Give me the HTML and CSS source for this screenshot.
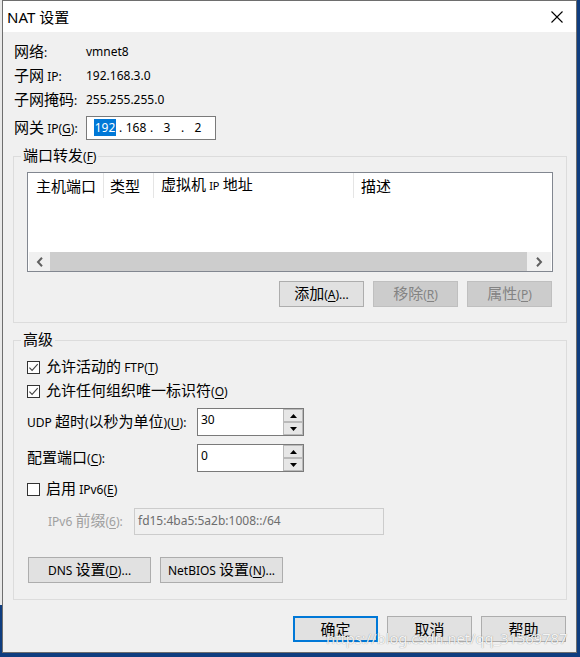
FILE: index.html
```html
<!DOCTYPE html>
<html lang="zh-CN">
<head>
<meta charset="utf-8">
<title>NAT 设置</title>
<link rel="stylesheet" href="styles.css">
</head>
<body>
<div class="win">
  <div class="titlebar">
    <span class="title">NAT 设置</span>
    <svg class="close" width="12" height="12" viewBox="0 0 12 12"><path d="M0.5 0.5L11.5 11.5M11.5 0.5L0.5 11.5" stroke="#000" stroke-width="1.1"/></svg>
  </div>
  <div class="body">
    <div class="info">
      <div class="row"><span class="lbl"><span class="c">网络</span>:</span><span>vmnet8</span></div>
      <div class="row"><span class="lbl"><span class="c">子网</span> IP:</span><span>192.168.3.0</span></div>
      <div class="row"><span class="lbl"><span class="c">子网掩码</span>:</span><span>255.255.255.0</span></div>
      <div class="row gw"><span class="lbl"><span class="c">网关</span> IP(<u>G</u>):</span>
        <div class="ipbox">
          <span class="seg"><span class="sel">192</span></span><span class="dot">.</span><span class="seg">168</span><span class="dot">.</span><span class="seg">3</span><span class="dot">.</span><span class="seg">2</span>
        </div>
      </div>
    </div>

    <fieldset class="group g1">
      <legend><span class="c">端口转发</span>(<u>F</u>)</legend>
      <div class="list">
        <div class="lhead">
          <div class="col col1"><span class="c">主机端口</span></div>
          <div class="col col2"><span class="c">类型</span></div>
          <div class="col col3"><span><span class="c">虚拟机</span> <span class="small">IP</span> <span class="c">地址</span></span></div>
          <div class="col col4"><span class="c">描述</span></div>
        </div>
        <div class="lbody"></div>
        <div class="hscroll">
          <div class="sarrow left"><svg width="8" height="10" viewBox="0 0 8 10"><path d="M6 0.8L2 5L6 9.2" fill="none" stroke="#606060" stroke-width="2"/></svg></div>
          <div class="thumb"></div>
          <div class="sarrow right"><svg width="8" height="10" viewBox="0 0 8 10"><path d="M2 0.8L6 5L2 9.2" fill="none" stroke="#606060" stroke-width="2"/></svg></div>
        </div>
      </div>
      <div class="btnrow">
        <button class="btn"><span><span class="c">添加</span>(<u>A</u>)...</span></button>
        <button class="btn dis"><span><span class="c">移除</span>(<u>R</u>)</span></button>
        <button class="btn dis"><span><span class="c">属性</span>(<u>P</u>)</span></button>
      </div>
    </fieldset>

    <fieldset class="group g2">
      <legend><span class="c">高级</span></legend>
      <div class="cbrow first">
        <svg class="cb" width="13" height="13" viewBox="0 0 13 13"><rect x="0.5" y="0.5" width="12" height="12" fill="#fff" stroke="#333"/><path d="M2.4 6.6L5.1 9.4L10.7 3.2" fill="none" stroke="#444" stroke-width="1.1"/></svg>
        <span><span class="c">允许活动的</span> FTP(<u>T</u>)</span>
      </div>
      <div class="cbrow second">
        <svg class="cb" width="13" height="13" viewBox="0 0 13 13"><rect x="0.5" y="0.5" width="12" height="12" fill="#fff" stroke="#333"/><path d="M2.4 6.6L5.1 9.4L10.7 3.2" fill="none" stroke="#444" stroke-width="1.1"/></svg>
        <span><span class="c">允许任何组织唯一标识符</span>(<u>O</u>)</span>
      </div>
      <div class="frow udp">
        <span class="flbl">UDP <span class="c">超时</span>(<span class="c">以秒为单位</span>)(<u>U</u>):</span>
        <div class="spin">
          <span class="val">30</span>
          <div class="spinbtns">
            <div class="sb"><svg width="7" height="4" viewBox="0 0 7 4"><path d="M0 4L3.5 0L7 4Z" fill="#000"/></svg></div>
            <div class="sb"><svg width="7" height="4" viewBox="0 0 7 4"><path d="M0 0L7 0L3.5 4Z" fill="#000"/></svg></div>
          </div>
        </div>
      </div>
      <div class="frow cfg">
        <span class="flbl"><span class="c">配置端口</span>(<u>C</u>):</span>
        <div class="spin">
          <span class="val">0</span>
          <div class="spinbtns">
            <div class="sb"><svg width="7" height="4" viewBox="0 0 7 4"><path d="M0 4L3.5 0L7 4Z" fill="#000"/></svg></div>
            <div class="sb"><svg width="7" height="4" viewBox="0 0 7 4"><path d="M0 0L7 0L3.5 4Z" fill="#000"/></svg></div>
          </div>
        </div>
      </div>
      <div class="cbrow third">
        <svg class="cb" width="13" height="13" viewBox="0 0 13 13"><rect x="0.5" y="0.5" width="12" height="12" fill="#fff" stroke="#333"/></svg>
        <span><span class="c">启用</span> IPv6(<u>E</u>)</span>
      </div>
      <div class="prow">
        <span class="plbl">IPv6 <span class="c">前缀</span>(<u>6</u>):</span>
        <div class="dinput">fd15:4ba5:5a2b:1008::/64</div>
      </div>
      <div class="dnsrow">
        <button class="btn wide"><span>DNS <span class="c">设置</span>(<u>D</u>)...</span></button>
        <button class="btn wide"><span>NetBIOS <span class="c">设置</span>(<u>N</u>)...</span></button>
      </div>
    </fieldset>

    <div class="footer">
      <button class="btn focus"><span class="c">确定</span></button>
      <button class="btn"><span class="c">取消</span></button>
      <button class="btn"><span class="c">帮助</span></button>
      <span class="wm">https://blog.csdn.net/qq_31569787</span>
    </div>
  </div>
</div>
</body>
</html>
```

FILE: styles.css
```css
* { box-sizing: border-box; }
html, body { margin: 0; padding: 0; }
body {
  width: 580px;
  height: 657px;
  overflow: hidden;
  background: linear-gradient(#e9e9e9, #e9e9e9) 0 0 / 2px 605px no-repeat, #0f3d7f;
  font-family: "Noto Sans", "Noto Sans CJK SC", sans-serif;
  font-size: 12px;
  line-height: 16px;
  color: #000;
}
.c { font-size: 15px; line-height: 14px; }
.small { font-size: 11px; }
u { text-decoration: underline; text-underline-offset: 2px; }

.win {
  margin-left: 2px;
  width: 575px;
  height: 653px;
  border: 1px solid #6e6e6e;
  background: #f0f0f0;
  display: flex;
  flex-direction: column;
}
.titlebar {
  height: 31px;
  flex: none;
  background: #fff;
  display: flex;
  align-items: center;
  justify-content: space-between;
  padding: 0 13px 0 4px;
}
.title { font-size: 15px; line-height: 20px; }

.body {
  flex: 1;
  padding: 8px 9px 0 10px;
}

.info .row {
  display: flex;
  align-items: center;
  height: 24px;
  padding-left: 1px;
}
.lbl { width: 72px; flex: none; }
.info .gw { margin-top: 4px; }
.ipbox {
  width: 130px;
  height: 24px;
  border: 1px solid #7a7a7a;
  background: #fff;
  display: flex;
  align-items: center;
  padding-left: 6px;
}
.seg { width: 24px; text-align: center; display: inline-block; }
.dot { width: 7px; text-align: center; display: inline-block; }
.sel { background: #0078d7; color: #fff; padding: 0 1px; }

.group {
  margin: 0;
  width: 554px;
  min-width: 0;
  border: 1px solid #dcdcdc;
}
.group legend {
  padding: 0 2px;
  margin-left: -6px;
  height: 16px;
  line-height: 16px;
}
.g1 { margin-top: 8px; padding: 8px 13px 15px 13px; }
.g2 { margin-top: 9px; padding: 8px 13px 16px 13px; }

.list {
  height: 100px;
  border: 1px solid #828790;
  background: #fff;
  display: flex;
  flex-direction: column;
}
.lhead { height: 25px; display: flex; flex: none; }
.col {
  display: flex;
  align-items: center;
  padding-left: 7px;
  border-right: 1px solid #e5e5e5;
  white-space: nowrap;
}
.col1 { width: 76px; padding-left: 8px; }
.col2 { width: 50px; padding-left: 6px; }
.col3 { width: 200px; }
.col4 { flex: 1; border-right: none; }
.lbody { flex: 1; }
.hscroll {
  height: 19px;
  flex: none;
  display: flex;
  margin: 0 1px 0 1px;
}
.sarrow {
  background: #f0f0f0;
  display: flex;
  align-items: center;
  justify-content: center;
}
.sarrow.left { width: 21px; }
.sarrow.right { width: 24px; }
.thumb { flex: 1; background: #cdcdcd; }

.btnrow {
  display: flex;
  justify-content: flex-end;
  gap: 9px;
  margin-top: 9px;
  margin-right: 1px;
}
.btn {
  width: 85px;
  height: 26px;
  margin: 0;
  padding: 0;
  border: 1px solid #adadad;
  background: #e1e1e1;
  font: inherit;
  color: #000;
  display: flex;
  align-items: center;
  justify-content: center;
  white-space: nowrap;
}
.btn.dis { background: #cccccc; border-color: #bfbfbf; color: #838383; }
.btn.focus { border: 2px solid #0078d7; }
.btn.wide { width: 123px; }

.cbrow {
  display: flex;
  align-items: center;
  gap: 6px;
  height: 22px;
}
.cbrow.second { margin-top: 2px; }
.cbrow.third { margin-top: 6px; }
.cb { flex: none; }

.frow {
  display: flex;
  align-items: center;
  height: 28px;
}
.frow.udp { margin-top: 6px; }
.frow.cfg { margin-top: 8px; }
.flbl { width: 170px; flex: none; white-space: nowrap; }
.spin {
  width: 107px;
  height: 28px;
  border: 1px solid #7a7a7a;
  background: #fff;
  display: flex;
}
.val { flex: 1; padding: 3px 0 0 3px; }
.spinbtns {
  width: 20px;
  display: flex;
  flex-direction: column;
  gap: 2px;
  background: #b9b9b9;
  border: 1px solid #b9b9b9;
}
.sb {
  flex: 1;
  background: #e6e6e6;
  display: flex;
  align-items: center;
  justify-content: center;
}

.prow {
  display: flex;
  align-items: center;
  height: 27px;
  margin-top: 8px;
  padding-left: 21px;
}
.plbl { width: 86px; flex: none; color: #a0a0a0; white-space: nowrap; }
.dinput {
  width: 250px;
  height: 27px;
  border: 1px solid #cccccc;
  background: #f0f0f0;
  color: #6d6d6d;
  padding: 4px 0 0 3px;
}

.dnsrow {
  display: flex;
  gap: 9px;
  margin-top: 22px;
  margin-left: 1px;
}

.footer {
  position: relative;
  display: flex;
  justify-content: flex-end;
  gap: 9px;
  margin-top: 16px;
  padding-right: 1px;
}
.wm {
  position: absolute;
  left: 313px;
  top: 12px;
  font-size: 14.7px;
  line-height: 20px;
  color: rgba(255, 255, 255, 0.92);
  text-shadow: 0 0 1px rgba(0, 0, 0, 0.45);
  white-space: nowrap;
  pointer-events: none;
}
```
